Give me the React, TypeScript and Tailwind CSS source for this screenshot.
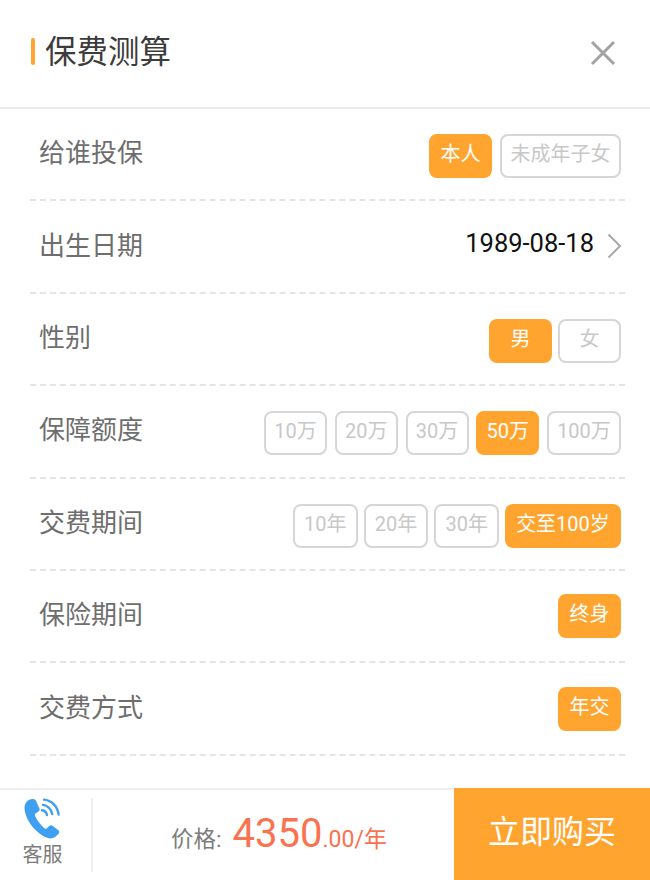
const font = "[font-family:Roboto,'Noto_Sans_CJK_SC',sans-serif]";

type Opt = { t: string; w: string; on?: boolean };

function Chip({ t, w, on }: Opt) {
  return (
    <div
      className={
        "flex h-11 items-center justify-center rounded-lg border-2 pb-1 text-[20px] leading-none " +
        w +
        (on
          ? " border-[#ffa42f] bg-[#ffa42f] text-white"
          : " border-[#d6d6d6] bg-white text-[#c8c8c8]")
      }
    >
      {t}
    </div>
  );
}

function Row({ label, children, gap = "gap-2" }: { label: string; children: React.ReactNode; gap?: string }) {
  return (
    <div className="ml-[30px] mr-[25px] flex h-[92.4px] items-center justify-between border-b-2 border-dashed border-[#e4e4e4] pl-[9px] pr-1 pt-1">
      <div className="pb-1.5 text-[26px] leading-none text-[#6e6e6e]">{label}</div>
      <div className={"flex items-center " + gap}>{children}</div>
    </div>
  );
}

function Phone() {
  return (
    <svg width="37" height="41" viewBox="0 0 38 42" fill="none">
      <path
        d="M6 1.5 C2.5 3 0.5 6 0.5 10 C0.8 18 5 25 10 31 C15 36 21 41 27 41.5 C31 41.5 34 39 36 36 C36.5 34.5 36 33.5 35 32.7 L29.5 28.6 C28.3 27.8 27 27.9 26 28.8 L23.5 31 C22.5 31.7 21.5 31.6 20.6 30.8 C17 27.5 13 22.5 11.4 18.5 C11 17.3 11.2 16.4 12.2 15.7 L15 13.8 C16 13 16.3 11.8 15.8 10.6 L12.3 2.8 C11.3 0.8 8.5 0.4 6 1.5 Z"
        fill="#3f9ff0"
      />
      <path d="M18.5 12.5 C21 12.8 23.2 15 23.6 17.5" stroke="#3f9ff0" strokeWidth="2.4" strokeLinecap="round" />
      <path d="M19.5 7 C24 7.5 28.3 11.5 29 16.5" stroke="#3f9ff0" strokeWidth="2.4" strokeLinecap="round" />
      <path d="M20.5 1.6 C28 2 34.5 8.5 35.6 17" stroke="#3f9ff0" strokeWidth="2.4" strokeLinecap="round" />
    </svg>
  );
}

export default function App() {
  return (
    <div className={"flex h-[880px] w-[650px] flex-col overflow-hidden bg-white " + font}>
      <header className="flex h-[109px] items-center justify-between border-b-2 border-[#ececec] pb-[9px] pl-[31px] pr-[34px]">
        <div className="flex items-center gap-2.5">
          <div className="mt-1 h-[27px] w-1 rounded-sm bg-[#ffa42f]" />
          <div className="pt-[7px] text-[31.5px] leading-none text-[#3c3c3c]">保费测算</div>
        </div>
        <svg width="26" height="26" viewBox="0 0 26 26" className="mt-[7px]" fill="none">
          <path d="M2 2 L24 24 M24 2 L2 24" stroke="#a3a3a3" strokeWidth="3" />
        </svg>
      </header>

      <Row label="给谁投保">
        <Chip t="本人" w="w-[63px]" on />
        <Chip t="未成年子女" w="w-[121px]" />
      </Row>
      <Row label="出生日期">
        <div className="-mr-px flex items-center gap-[13px]">
          <span className="pb-2.5 text-[25.5px] leading-none text-[#111111]">1989-08-18</span>
          <svg width="15" height="26" viewBox="0 0 15 26" className="mb-1.5" fill="none">
            <path d="M1.5 1.5 L13 13 L1.5 24.5" stroke="#a8a8a8" strokeWidth="2" />
          </svg>
        </div>
      </Row>
      <Row label="性别" gap="gap-[6px]">
        <Chip t="男" w="w-[63px]" on />
        <Chip t="女" w="w-[63px]" />
      </Row>
      <Row label="保障额度" gap="gap-[7.75px]">
        <Chip t="10万" w="w-[63px]" />
        <Chip t="20万" w="w-[63px]" />
        <Chip t="30万" w="w-[63px]" />
        <Chip t="50万" w="w-[63px]" on />
        <Chip t="100万" w="w-[74px]" />
      </Row>
      <Row label="交费期间" gap="gap-[6px]">
        <Chip t="10年" w="w-[64.7px]" />
        <Chip t="20年" w="w-[64.7px]" />
        <Chip t="30年" w="w-[64.7px]" />
        <Chip t="交至100岁" w="w-[116px]" on />
      </Row>
      <Row label="保险期间" gap="mb-1">
        <Chip t="终身" w="w-[63px]" on />
      </Row>
      <Row label="交费方式" gap="mb-1">
        <Chip t="年交" w="w-[63px]" on />
      </Row>

      <footer className="mt-auto flex h-[92px] border-t-2 border-[#eeeeee]">
        <div className="my-2 flex w-[93px] shrink-0 flex-col items-center border-r-2 border-[#f0f0f0] pr-1.5">
          <Phone />
          <span className="mt-[6px] text-[20px] leading-none text-[#7c7c7c]">客服</span>
        </div>
        <div className="flex flex-1 items-baseline justify-center pl-[11px] pt-[24px] text-[#fa7350]">
          <span className="mr-[11px] text-[22.5px] leading-none text-[#7c7c7c]">价格:</span>
          <span className="text-[40px] leading-none">4350</span>
          <span className="text-[23px] leading-none">.00/年</span>
        </div>
        <div className="-mt-0.5 flex w-[196px] shrink-0 items-center justify-center bg-[#ffa42f] pb-1 text-[32px] leading-none text-white">
          立即购买
        </div>
      </footer>
    </div>
  );
}
